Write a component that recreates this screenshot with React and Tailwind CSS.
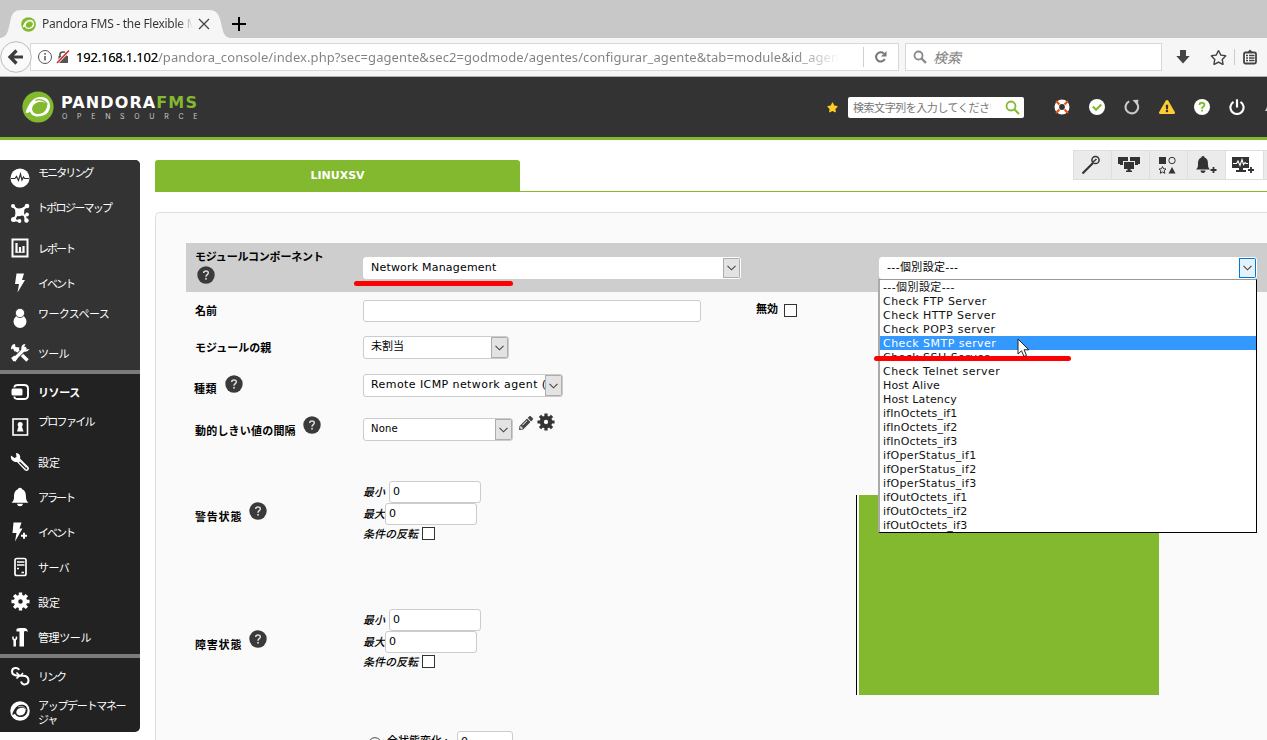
import React from 'react';
import { FaStar, FaRegStar, FaExclamationTriangle, FaPencilAlt } from 'react-icons/fa';

function PandoraMark({ size, disc = '#82b92e', ring = '#fff' }) {
  return (
    <svg width={size} height={size} viewBox="0 0 32 32" className="block shrink-0">
      <circle cx="16" cy="16" r="15.6" fill={disc} />
      <path
        fillRule="evenodd"
        fill={ring}
        d="M3.500 21.500C6 14 10 6.500 18 6C24.500 5.500 28 9.500 28 15C28 22 22 25.500 16 25.500C12 25.500 9 23.500 8 20.500C7 21.500 5.500 22.500 3.500 21.500ZM11.500 14C8.500 18 10.500 22.500 15.500 23C21 23.500 25.500 19 25 13.500C22.500 10 16 9.500 11.500 14Z"
      />
      <path d="M13 9.500C18 7.500 23 9 25.500 13.500" fill="none" stroke={disc} strokeWidth="1.200" />
    </svg>
  );
}

function Gear({ size, color, className = '' }) {
  return (
    <svg width={size} height={size} viewBox="0 0 20 20" className={'block shrink-0 ' + className}>
      <circle cx="10" cy="10" r="4.700" fill="none" stroke={color} strokeWidth="4.600" />
      <path
        d="M10 .5V4M10 16V19.500M.5 10H4M16 10H19.500M3.300 3.300L5.800 5.800M14.200 14.200L16.700 16.700M3.300 16.700L5.800 14.200M14.200 5.800L16.700 3.300"
        stroke={color}
        strokeWidth="3.600"
      />
    </svg>
  );
}

function Help({ className }) {
  return (
    <svg width="18" height="18" viewBox="0 0 18 18" className={'block shrink-0 ' + className}>
      <circle cx="9" cy="9" r="8.700" fill="#3a3a3a" />
      <path d="M6.700 7C6.700 4.200 11.400 4.200 11.300 7C11.300 8.600 9 8.700 9 10.700" fill="none" stroke="#ddd" strokeWidth="1.500" />
      <rect x="8.200" y="11.900" width="1.600" height="1.700" fill="#ddd" />
    </svg>
  );
}

const Svg = ({ w = 20, h = 20, children }) => (
  <svg width={w} height={h} viewBox="0 0 20 20" className="block" fill="none">{children}</svg>
);

const icons = {
  monitor: (
    <Svg>
      <circle cx="10" cy="10" r="9.500" fill="#fff" />
      <path d="M1 10.500H5L6.500 8.500L8.500 12.500L10.500 6L12 12L13.500 9L14.500 10.500H19" stroke="#333" strokeWidth="1.200" />
    </Svg>
  ),
  topology: (
    <Svg>
      <path d="M3 3L9 9L17 3M8 9L4 17L9 18M10 9L15 13L16 18" stroke="#fff" strokeWidth="2.200" />
      <path d="M5 4.500Q9.500 6.500 14.500 4L14 12Q9 14 5.500 12.500Z" fill="#fff" />
      <circle cx="3" cy="3" r="2" fill="#fff" />
      <circle cx="17" cy="3" r="2.300" fill="#fff" />
      <circle cx="3.500" cy="16.500" r="2.500" fill="#fff" />
      <circle cx="9.500" cy="18" r="1.900" fill="#fff" />
      <circle cx="16.500" cy="17.500" r="2.200" fill="#fff" />
      <circle cx="17" cy="11.500" r="1.900" fill="#fff" />
    </Svg>
  ),
  report: (
    <Svg>
      <rect x="2.500" y="1.500" width="15" height="17" stroke="#fff" strokeWidth="2" />
      <path d="M6.500 5V14.500M10 9V14.500M13.500 8V14.500" stroke="#fff" strokeWidth="2.200" />
      <path d="M5.500 14.200H14.500" stroke="#fff" strokeWidth="1" />
    </Svg>
  ),
  bolt: (
    <Svg><path d="M6.500 .5H14L12 7H15L7.500 19.500L9 11H5Z" fill="#fff" /></Svg>
  ),
  user: (
    <Svg>
      <circle cx="10" cy="13.500" r="6.500" fill="#fff" />
      <circle cx="10" cy="5" r="4.600" fill="#fff" stroke="#333" strokeWidth=".8" />
    </Svg>
  ),
  tools: (
    <Svg>
      <path d="M6 6L17.500 17.500" stroke="#fff" strokeWidth="3.400" />
      <path d="M5 1C1.500 1 1 4.500 1 6.500L3 5.500L4.500 8.500L8.500 8L9.500 4.500L5.500 4Z" fill="#fff" />
      <path d="M15 5.500L3.500 17" stroke="#333" strokeWidth="5" />
      <path d="M15 5.500L4 16.500" stroke="#fff" strokeWidth="3.200" strokeLinecap="round" />
      <path d="M13 1.500Q10.500 4 11.500 7.500L14 8.500Q17.500 9.500 19.500 6L16 6.500L14 4.500L15.500 1Z" fill="#fff" />
      <path d="M1 15L4.500 12.500L7.500 15.500L5 19L4.500 16.500L2.500 16.500Z" fill="#fff" />
    </Svg>
  ),
  resources: (
    <Svg>
      <path d="M4.500 5.500V4.500Q5 3 8 3H14Q18 3 18 6.500V13.500Q18 17 14 17H8Q5 17 4.500 15.500V14.500" stroke="#fff" strokeWidth="1.900" />
      <rect x="1.500" y="6.500" width="11" height="7" rx="1.500" fill="#fff" />
    </Svg>
  ),
  profile: (
    <Svg>
      <rect x="3" y="2" width="14.500" height="16" stroke="#fff" strokeWidth="1.600" />
      <circle cx="10.200" cy="7.500" r="2.500" fill="#fff" />
      <path d="M8.700 9H11.700L13.500 14.500H7Z" fill="#fff" />
    </Svg>
  ),
  wrench: (
    <Svg>
      <path d="M1 3.500L4.500 6L6.500 5L6 1C9 1 11 4 10 6.500L18.500 15C20 17.500 17.500 20 15 18.500L7 10C4 10.500 0 8 1 3.500Z" fill="#fff" />
      <path d="M9.500 10L15.500 16" stroke="#222" strokeWidth="1.300" />
      <circle cx="16.300" cy="16.600" r="1" fill="#222" />
    </Svg>
  ),
  bell: (
    <Svg>
      <path d="M10 .7C11.500 .7 12 1.500 12 2.300C15.500 3.500 16 7 16 10.500C16 13 17 14.500 18.500 15.800H1.500C3 14.500 4 13 4 10.500C4 7 4.500 3.500 8 2.300C8 1.500 8.500 .7 10 .7ZM7 16.800H13C12.700 18.500 11.500 19.300 10 19.300S7.300 18.500 7 16.800Z" fill="#fff" />
    </Svg>
  ),
  boltplus: (
    <Svg>
      <path d="M3.500 .5H11.500L9.500 6.500H12.500L5 19.500L6.500 11H2.500Z" fill="#fff" />
      <path d="M11 13.800H17M14 10.800V16.800" stroke="#fff" strokeWidth="2" />
    </Svg>
  ),
  server: (
    <Svg>
      <rect x="5" y="1.500" width="11" height="17" rx="1.800" stroke="#fff" strokeWidth="1.700" />
      <path d="M7 5H14.500M7 8H14.500" stroke="#fff" strokeWidth="1.600" />
      <path d="M7 11.500H9M11.500 15.500H14" stroke="#fff" strokeWidth="1.400" />
    </Svg>
  ),
  gear: <Gear size={19} color="#fff" />,
  admin: (
    <Svg>
      <path d="M6.500 2Q8 .8 11 1H15Q17.500 1.500 17.800 5Q16 3.500 14 4.500V19.500H9.500V4.500H6.500Z" fill="#fff" />
      <path d="M3 9.500Q2.500 12.500 4.500 13M6.500 9.500Q7 12.500 4.500 13" stroke="#fff" strokeWidth="1.400" />
      <path d="M4.700 12.500V19.500" stroke="#fff" strokeWidth="2.500" />
    </Svg>
  ),
  link: (
    <Svg>
      <path d="M9 4C8 1 2 1 2 5.500C2 9 5 9.500 8 9.700H13C17 9.700 18.500 12 18.500 14.500C18.500 19 12.500 20 11 15.500" stroke="#fff" strokeWidth="2" />
      <path d="M6.500 6.500L9.500 9.700L6.500 12.500M13 7L10.500 9.700" stroke="#fff" strokeWidth="1.600" />
    </Svg>
  ),
  pandora: <PandoraMark size={20} disc="#fff" ring="#222" />,
};

const cjk = "font-['Noto_Sans_CJK_JP',sans-serif]";

function Item({ icon, children, className = '' }) {
  return (
    <div className="flex h-[35px] shrink-0 items-center">
      <div className="ml-[10px] flex w-[20px] shrink-0 justify-center">{icons[icon]}</div>
      <div className={'ml-[8px] whitespace-nowrap text-[11px] leading-[14px] text-white ' + className}>{children}</div>
    </div>
  );
}

function Sidebar() {
  return (
    <nav className={'mt-5 flex h-[572px] w-[140px] shrink-0 flex-col overflow-hidden rounded-r-[5px] bg-[#222] ' + cjk}>
      <div className="h-[210px] bg-[#333]">
        <Item icon="monitor" className="mb-[11px] tracking-[-1.9px]">モニタリング</Item>
        <Item icon="topology" className="mb-[12px] -translate-x-px tracking-[-1.7px]">トポロジーマップ</Item>
        <Item icon="report" className="tracking-[-2px]">レポート</Item>
        <Item icon="bolt" className="tracking-[-2px]">イベント</Item>
        <Item icon="user" className="mb-[10px] tracking-[-0.6px]">ワークスペース</Item>
        <Item icon="tools" className="tracking-[-0.7px]">ツール</Item>
      </div>
      <div className="h-1 bg-[#7b7b7b]" />
      <div className="h-[280px]">
        <Item icon="resources" className="font-bold tracking-[-0.4px]">リソース</Item>
        <Item icon="profile" className="mb-[11px] tracking-[-1.7px]">プロファイル</Item>
        <Item icon="wrench">設定</Item>
        <Item icon="bell" className="tracking-[-2px]">アラート</Item>
        <Item icon="boltplus" className="tracking-[-2px]">イベント</Item>
        <Item icon="server" className="tracking-[-0.6px]">サーバ</Item>
        <Item icon="gear">設定</Item>
        <Item icon="admin" className="tracking-[-0.4px]">管理ツール</Item>
      </div>
      <div className="h-1 bg-[#7b7b7b]" />
      <Item icon="link" className="tracking-[-2px]">リンク</Item>
      <Item icon="pandora" className="mt-[3px] tracking-[-1.3px]">アップデートマネー<br />ジャ</Item>
    </nav>
  );
}

function Browser() {
  return (
    <div className="shrink-0 bg-[#c8c8c8] font-['Noto_Sans',sans-serif]">
      <div className="flex h-[38px] items-end">
        <div className="relative h-[28px] w-[230px]">
          <svg className="absolute inset-0" width="230" height="28" viewBox="0 0 230 28">
            <path d="M0 28C7 27 8 22 10 12C12 3 14 0 22 0H208C217 0 219 4 221 13C223 22 224 27 230 28Z" fill="#f6f6f6" />
          </svg>
          <div className="relative flex h-[28px] items-center pl-[21px]">
            <PandoraMark size={15} />
            <span className="ml-[6px] w-[151px] overflow-hidden bg-linear-to-r from-[#333] from-90% to-transparent bg-clip-text text-[12px] leading-[18px] tracking-[-0.26px] whitespace-nowrap text-transparent">Pandora FMS - the Flexible M</span>
            <svg width="12" height="12" viewBox="0 0 12 12" className="ml-[5px]"><path d="M1 1L11 11M11 1L1 11" stroke="#444" strokeWidth="1.300" /></svg>
          </div>
        </div>
        <svg width="14" height="14" viewBox="0 0 14 14" className="mb-[7px] ml-[2px]"><path d="M7 0V14M0 7H14" stroke="#000" strokeWidth="2" /></svg>
      </div>
      <div className="relative flex h-[39px] items-center border-b border-[#b0b0b0] bg-[#f6f6f6]">
        <svg width="32" height="32" viewBox="0 0 32 32" className="z-10 -mr-[2px] shrink-0">
          <circle cx="16" cy="16" r="15.300" fill="#fafafa" stroke="#bbb" strokeWidth="1" />
          <path d="M23 16H11M16.500 9.500L10 16L16.500 22.500" fill="none" stroke="#3c3c3c" strokeWidth="3.200" />
        </svg>
        <div className="flex h-[28px] w-[869px] shrink-0 items-center border border-[#d8d8d8] bg-white">
          <svg width="16" height="16" viewBox="0 0 16 16" className="ml-[6px] shrink-0"><circle cx="8" cy="8" r="6.500" fill="none" stroke="#555" /><path d="M8 7V11.500M8 4V5.700" stroke="#555" strokeWidth="1.500" /></svg>
          <svg width="14" height="14" viewBox="0 0 14 14" className="ml-[3px] shrink-0"><path d="M4 7V4.500Q4 2 7 2T10 4.500V7" fill="none" stroke="#555" strokeWidth="1.600" /><rect x="2.500" y="6" width="9.500" height="7" fill="#555" /><path d="M13 .5L1 13" stroke="#fff" strokeWidth="3" /><path d="M13 .5L1 13" stroke="#d22" strokeWidth="1.500" /></svg>
          <span className="ml-[6px] w-[764px] overflow-hidden bg-linear-to-r from-[#808080] from-94% to-transparent bg-clip-text text-[13px] leading-[20px] tracking-[0.08px] whitespace-nowrap text-transparent"><span className="tracking-[-0.22px] text-black">192.168.1.102</span>/pandora_console/index.php?sec=gagente&amp;sec2=godmode/agentes/configurar_agente&amp;tab=module&amp;id_agen</span>
          <div className="ml-[23px] h-5 w-px shrink-0 bg-[#d0d0d0]" />
          <svg width="14" height="14" viewBox="0 0 14 14" className="ml-[10px] shrink-0"><path d="M10.800 9A4.600 4.600 0 1 1 9.800 3.500" fill="none" stroke="#777" strokeWidth="2" /><path d="M12.500 1V6.500H7Z" fill="#777" /></svg>
        </div>
        <div className="ml-[6px] flex h-[28px] w-[257px] shrink-0 items-center border border-[#d8d8d8] bg-white">
          <svg width="14" height="14" viewBox="0 0 14 14" className="ml-[7px]"><circle cx="5.500" cy="5.500" r="4" fill="none" stroke="#8a8a8a" strokeWidth="1.800" /><path d="M8.500 8.500L13 13" stroke="#8a8a8a" strokeWidth="2.400" /></svg>
          <span className={'ml-[6px] text-[14px] leading-5 text-[#808080] italic ' + cjk}>検索</span>
        </div>
        <svg width="14" height="16" viewBox="0 0 14 16" className="ml-[14px] shrink-0"><path d="M4 1H10V7H13.700L7 14.500L.3 7H4Z" fill="#444" /></svg>
        <FaRegStar size={17} color="#444" className="ml-[20px] shrink-0" />
        <div className="ml-[7px] h-4 w-px shrink-0 bg-[#ccc]" />
        <svg width="14" height="16" viewBox="0 0 14 16" className="ml-[8px] shrink-0"><path d="M4 3.500L7 .5L10 3.500Z" fill="#444" /><rect x="1" y="3.500" width="12" height="11" rx="1.500" fill="#fff" stroke="#444" strokeWidth="1.800" /><path d="M3 6.500H5M6 6.500H11.500M3 9H5M6 9H11.500M3 11.500H5M6 11.500H11.500" stroke="#444" strokeWidth="1.300" /></svg>
      </div>
    </div>
  );
}

function HeaderIcon({ children }) {
  return (
    <div className="flex w-[35px] justify-center">
      <svg width="16" height="16" viewBox="0 0 16 16" fill="none">{children}</svg>
    </div>
  );
}

function Header() {
  return (
    <header className="flex h-[63px] shrink-0 items-center border-b-[3px] border-[#82b92e] bg-[#333]">
      <div className="ml-[22px]"><PandoraMark size={32} /></div>
      <div className="ml-[7px] w-[751px] pt-px">
        <div className="font-['DejaVu_Sans',sans-serif] text-[16px] leading-[16px] font-bold tracking-[1.1px] text-white">PANDORA<span className="text-[#82b92e]">FMS</span></div>
        <div className="mt-[2px] ml-px font-['Inter',sans-serif] text-[7px] leading-[8px] tracking-[9.7px] text-[#ccc]">OPENSOURCE</div>
      </div>
      <FaStar size={11} color="#fc2" className="ml-[15px] shrink-0" />
      <div className="ml-[10px] flex h-[21px] w-[176px] shrink-0 items-center rounded-[2px] bg-white">
        <span className={'ml-[5px] w-[138px] overflow-hidden text-[11px] leading-[16px] tracking-[-0.45px] whitespace-nowrap text-[#777] ' + cjk}>検索文字列を入力してください</span>
        <svg width="15" height="15" viewBox="0 0 15 15" className="ml-[14px] shrink-0"><circle cx="6" cy="6" r="4.500" fill="none" stroke="#82b92e" strokeWidth="1.800" /><path d="M9.300 9.300L14 14" stroke="#82b92e" strokeWidth="2" /></svg>
      </div>
      <div className="ml-[20px] flex shrink-0">
        <HeaderIcon>
          <circle cx="8" cy="8" r="5.200" stroke="#fff" strokeWidth="4.600" />
          <path d="M3 4.500L4.500 3M11.500 3L13 4.500M13 11.500L11.500 13M4.500 13L3 11.500" stroke="#e8500f" strokeWidth="4.800" />
        </HeaderIcon>
        <HeaderIcon>
          <circle cx="8" cy="8" r="8" fill="#fff" />
          <path d="M3.800 7.500L7 10.700L12.300 5.500" stroke="#82b92e" strokeWidth="2.100" />
        </HeaderIcon>
        <HeaderIcon>
          <path d="M12.300 3.600A6.300 6.300 0 1 1 5.200 2.400" stroke="#ccc" strokeWidth="2.100" />
          <path d="M8.500 1L14.500 .8L13.500 6.500Z" fill="#ccc" />
        </HeaderIcon>
        <div className="flex w-[35px] justify-center"><FaExclamationTriangle size={16} color="#fc3" /></div>
        <HeaderIcon>
          <circle cx="8" cy="8" r="8" fill="#fff" />
          <path d="M5.500 6C5.500 3 10.500 3 10.400 6C10.300 7.800 8 7.700 8 9.700M8 10.800V12.600" stroke="#82b92e" strokeWidth="1.900" />
        </HeaderIcon>
        <HeaderIcon>
          <path d="M4.500 2.800A6.600 6.600 0 1 0 11.500 2.800" stroke="#fff" strokeWidth="2.100" />
          <path d="M8 .3V8.500" stroke="#fff" strokeWidth="2.200" />
        </HeaderIcon>
      </div>
      <svg width="2" height="4" viewBox="0 0 2 4" className="mt-1 ml-[11px] shrink-0"><path d="M2 0V4H0Z" fill="#ccc" /></svg>
    </header>
  );
}

function Tool({ active, children }) {
  return <div className={'flex h-[30px] w-[38px] shrink-0 items-center justify-center border border-l-0 border-[#dedede] pr-[3px] ' + (active ? 'bg-white' : 'bg-[#ebebeb]')}>{children}</div>;
}

function Toolbar() {
  return (
    <div className="-mt-[10px] flex h-[30px] w-[194px] overflow-hidden border-l border-[#dedede]">
      <Tool><svg width="20" height="20" viewBox="0 0 20 20"><path d="M1.500 18.500L12 8" stroke="#333" strokeWidth="2.200" /><circle cx="14.500" cy="5" r="3.600" fill="none" stroke="#333" strokeWidth="1.500" /><path d="M12 7L15.500 4" stroke="#333" strokeWidth="1.600" /></svg></Tool>
      <Tool><svg width="22" height="18" viewBox="0 0 22 18"><path d="M0 1H10V5H5V9H2V8H0ZM12 1H22V8H20V9H17V5H12Z" fill="#333" /><rect x="6" y="6" width="10" height="7" fill="#333" /><path d="M9.500 13H12.500V14.500H14V16H8V14.500H9.500Z" fill="#333" /></svg></Tool>
      <Tool><svg width="18" height="18" viewBox="0 0 18 18"><rect x="1" y="1" width="7" height="7" fill="#333" /><circle cx="14" cy="4.500" r="3.200" fill="none" stroke="#333" /><path d="M4.500 10.500L5.600 12.800L8 13L6.200 14.800L6.800 17.300L4.500 16L2.300 17.300L2.800 14.800L1 13L3.500 12.800Z" fill="none" stroke="#333" /><path d="M14 11L17.500 17.500H10.500Z" fill="#333" /></svg></Tool>
      <Tool><svg width="23" height="20" viewBox="0 0 23 20"><path d="M9 1C10.500 1 10.500 2 10.500 2.500C14 3.500 14 7 14 10C14 12 15 13.500 16 14.500H2C3 13.500 4 12 4 10C4 7 4 3.500 7.500 2.500C7.500 2 7.500 1 9 1ZM6.500 15.500H11.500C11.500 17 10.500 18 9 18S6.500 17 6.500 15.500Z" fill="#333" /><path d="M16.500 15H22.500M19.500 12V18" stroke="#333" strokeWidth="1.800" /></svg></Tool>
      <Tool active><svg width="22" height="18" viewBox="0 0 22 18"><path d="M0 1H17V12H11V14H14V16H4V14H7V12H0Z" fill="#333" /><path d="M1 7.500H4.500L6 5L8 9.500L10 3.500L11.500 8.500L13 6.500L14 7.500H16" fill="none" stroke="#fff" strokeWidth="1.100" /><path d="M16 14H22M19 11V17" stroke="#333" strokeWidth="1.800" /></svg></Tool>
      <Tool />
    </div>
  );
}

function Select({ className = '', textClass = '', button = '', children }) {
  return (
    <div className={'flex shrink-0 overflow-hidden rounded-[3px] border bg-white ' + className}>
      <span className={'flex-1 overflow-hidden pl-[7px] whitespace-nowrap text-black ' + textClass}>{children}</span>
      <span className={'flex w-[17px] shrink-0 items-center justify-center border ' + (button || 'border-[#adadad] bg-[#e3e3e3]')}>
        <svg width="9" height="6" viewBox="0 0 9 6"><path d="M.5 .8L4.500 4.800L8.500 .8" fill="none" stroke="#444" strokeWidth="1.100" /></svg>
      </span>
    </div>
  );
}

const verdana = "font-['DejaVu_Sans','Noto_Sans_CJK_JP',sans-serif]";

function Label({ className = '', children }) {
  return <span className={'text-[11px] leading-[14px] whitespace-nowrap text-black ' + cjk + ' ' + className}>{children}</span>;
}

function Box({ className = '' }) {
  return <span className={'block h-[13px] w-[13px] shrink-0 border border-[#333] bg-white ' + className} />;
}

function Field({ className = '', children }) {
  return <div className={'h-[22px] shrink-0 rounded-[3px] border border-[#ccc] bg-white pl-[3px] text-[11px] leading-[20px] text-black ' + className}>{children}</div>;
}

function Threshold({ name }) {
  return (
    <div className="flex h-[128px]">
      <div className="flex w-[177px] shrink-0 pl-[9px]">
        <Label className="mt-[28px] font-bold tracking-[0.8px]">{name}</Label>
        <Help className="mt-[21px] ml-[7px]" />
      </div>
      <div>
        <div className="flex h-[22px] items-center pb-px"><Label className="mt-[-1px] w-[26px] font-medium italic">最小</Label><Field className="mt-px w-[92px]">0</Field></div>
        <div className="flex h-[22px] items-center pb-px"><Label className="mt-[-1px] w-[22px] font-medium italic">最大</Label><Field className="mt-px w-[92px]">0</Field></div>
        <div className="flex h-[17px] items-center"><Label className="mt-[-2px] w-[59px] font-medium italic">条件の反転</Label><Box /></div>
      </div>
    </div>
  );
}

const options = [
  '---個別設定---', 'Check FTP Server', 'Check HTTP Server', 'Check POP3 server', 'Check SMTP server', 'Check SSH Server',
  'Check Telnet server', 'Host Alive', 'Host Latency', 'ifInOctets_if1', 'ifInOctets_if2', 'ifInOctets_if3',
  'ifOperStatus_if1', 'ifOperStatus_if2', 'ifOperStatus_if3', 'ifOutOctets_if1', 'ifOutOctets_if2', 'ifOutOctets_if3',
];

function optionTracking(label) {
  if (label.startsWith('Check')) return 'tracking-[0.46px] ';
  if (label.startsWith('ifOper')) return 'tracking-[0.32px] ';
  if (label.startsWith('---')) return 'tracking-[0.4px] ';
  return 'tracking-[0.15px] ';
}

function Dropdown() {
  return (
    <ul className="absolute top-[22px] -left-px z-20 h-[254px] w-[379px] border border-l-2 border-black border-t-[#999] border-l-[#aaa] bg-white text-[11px] leading-[15px] text-[#111]">
      {options.map((o) => (
        <li key={o} className={'h-[14px] pl-[3px] whitespace-nowrap ' + optionTracking(o) + (o === 'Check SMTP server' ? 'bg-[#3399ff] text-white' : '')}>{o}</li>
      ))}
      <li className="absolute top-[76px] -left-[6px] h-[5px] w-[197px] rounded-full bg-[#f00]" />
      <li className="absolute top-[58px] left-[137px]">
        <svg width="13" height="20" viewBox="0 0 13 20"><path d="M1 1V16L4.500 12.800L7 18.500L9.500 17.400L7 11.800H11.800Z" fill="#fff" stroke="#222" /></svg>
      </li>
    </ul>
  );
}

function Form() {
  return (
    <section className={'mt-[20px] h-[528px] w-[1112px] overflow-hidden rounded-tl-[5px] border-t border-l border-[#dedede] bg-[#fafafa] pt-[30px] pl-[30px] ' + verdana}>
      <div className="flex h-[49px] bg-[#cecece]">
        <div className="w-[177px] shrink-0 pt-[6px] pl-[9px]">
          <Label className="block font-bold tracking-[-0.2px]">モジュールコンポーネント</Label>
          <Help className="mt-[3px] ml-[2px]" />
        </div>
        <div className="relative mt-[14px]">
          <Select className="h-[22px] w-[378px] border-white" textClass="text-[11px] leading-[19px] tracking-[0.2px]">Network Management</Select>
          <div className="absolute top-[24px] -left-[9px] h-[5px] w-[159px] rounded-full bg-[#f00]" />
        </div>
        <div className="relative mt-[14px] ml-[138px] h-[22px]">
          <Select className="h-[22px] w-[378px] border-white" textClass="text-[11px] leading-[19px] tracking-[0.35px]" button="border-[#0078d7] bg-[#e5f1fb]">---個別設定---</Select>
          <Dropdown />
        </div>
      </div>
      <div className="flex h-[37px]">
        <Label className="mt-[11px] w-[177px] pl-[9px] font-bold">名前</Label>
        <Field className="mt-[8px] w-[338px]" />
        <Label className="mt-[9px] ml-[55px] w-[28px] font-bold">無効</Label>
        <Box className="mt-[12px]" />
      </div>
      <div className="flex h-[37px]">
        <Label className="mt-[11px] w-[177px] pl-[9px] font-bold">モジュールの親</Label>
        <Select className="mt-[7px] h-[23px] w-[146px] border-[#ccc]" textClass="text-[11px] leading-[20px]">未割当</Select>
      </div>
      <div className="flex h-[38px]">
        <div className="flex w-[177px] pl-[8px]">
          <Label className="mt-[15px] font-bold tracking-[0.5px]">種類</Label>
          <Help className="mt-[9px] ml-[8px]" />
        </div>
        <Select className="mt-[8px] h-[23px] w-[200px] border-[#ccc]" textClass="text-[11px] leading-[20px] tracking-[0.42px]">Remote ICMP network agent (</Select>
      </div>
      <div className="flex h-[77px]">
        <div className="flex w-[177px] pl-[9px]">
          <Label className="mt-[19px] w-[101px] font-bold tracking-[0.2px]">動的しきい値の間隔</Label>
          <Help className="mt-[12px] ml-[7px]" />
        </div>
        <Select className="mt-[14px] h-[23px] w-[150px] border-[#ccc]" textClass="text-[10px] leading-[20px] tracking-[0.2px]">None</Select>
        <FaPencilAlt size={14} color="#444" className="mt-[12px] ml-[6px]" />
        <Gear size={18} color="#333" className="mt-[9px] ml-[4px]" />
      </div>
      <div className="flex">
        <div className="w-[670px] shrink-0">
          <Threshold name="警告状態" />
          <Threshold name="障害状態" />
        </div>
        <div className="mt-[14px] h-[200px] w-[303px] border-l border-black pl-[2px]"><div className="h-full bg-[#82b92e]" /></div>
      </div>
      <div className="-mt-[6px] flex pl-[182px]">
        <svg width="14" height="14" viewBox="0 0 14 14" className="mt-[6px]"><circle cx="7" cy="7" r="6.300" fill="#fff" stroke="#444" /></svg>
        <Label className="mt-[2px] ml-[5px] w-[70px] font-medium">全状態変化 :</Label>
        <Field className="w-[56px]">0</Field>
      </div>
    </section>
  );
}

export default function App() {
  return (
    <div className="flex h-[740px] w-[1267px] flex-col overflow-hidden bg-white">
      <Browser />
      <Header />
      <div className="flex min-h-0 flex-1">
        <Sidebar />
        <main className="ml-[15px] w-[1112px] pt-[20px]">
          <div className="flex h-[32px] justify-between border-b border-[#82b92e]">
            <div className={'h-[32px] w-[365px] rounded-t-[3px] bg-[#82b92e] text-center text-[11px] leading-[31px] font-bold text-white ' + verdana}>LINUXSV</div>
            <Toolbar />
          </div>
          <Form />
        </main>
      </div>
    </div>
  );
}
